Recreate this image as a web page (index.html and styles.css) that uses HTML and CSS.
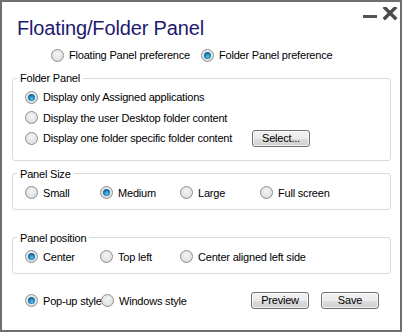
FILE: index.html
```html
<!DOCTYPE html>
<html lang="en">
<head>
  <meta charset="UTF-8">
  <title>Floating/Folder Panel</title>
  <link rel="stylesheet" href="styles.css">
</head>
<body>
  <div class="window">
    <!-- Header -->
    <div class="header">
      <h1 class="title">Floating/Folder Panel</h1>
      <div class="controls">
        <svg class="ctrl-icon" width="36" height="14" viewBox="0 0 36 14">
          <rect x="1" y="8" width="14" height="3" fill="#555"/>
          <path d="M23 1 L33 11 M33 1 L23 11" stroke="#4b4b4b" stroke-width="3.4" stroke-linecap="square"/>
        </svg>
      </div>
    </div>

    <div class="mode-row">
      <label class="opt opt-mode"><span class="radio"></span>Floating Panel preference</label>
      <label class="opt"><span class="radio checked"></span>Folder Panel preference</label>
    </div>

    <!-- Folder Panel -->
    <fieldset class="group group-folder">
      <legend class="group-title">Folder Panel</legend>
      <div class="row"><label class="opt"><span class="radio checked"></span>Display only Assigned applications</label></div>
      <div class="row"><label class="opt"><span class="radio"></span>Display the user Desktop folder content</label></div>
      <div class="row">
        <label class="opt opt-wide"><span class="radio"></span>Display one folder specific folder content</label>
        <button class="btn" type="button">Select...</button>
      </div>
    </fieldset>

    <!-- Panel Size -->
    <fieldset class="group">
      <legend class="group-title">Panel Size</legend>
      <div class="row cols">
        <label class="opt"><span class="radio"></span>Small</label>
        <label class="opt"><span class="radio checked"></span>Medium</label>
        <label class="opt"><span class="radio"></span>Large</label>
        <label class="opt"><span class="radio"></span>Full screen</label>
      </div>
    </fieldset>

    <!-- Panel position -->
    <fieldset class="group group-position">
      <legend class="group-title">Panel position</legend>
      <div class="row cols">
        <label class="opt"><span class="radio checked"></span>Center</label>
        <label class="opt"><span class="radio"></span>Top left</label>
        <label class="opt"><span class="radio"></span>Center aligned left side</label>
      </div>
    </fieldset>

    <!-- Footer -->
    <div class="footer row">
      <label class="opt opt-popup"><span class="radio checked"></span>Pop-up style</label>
      <label class="opt"><span class="radio"></span>Windows style</label>
      <div class="actions">
        <button class="btn" type="button">Preview</button>
        <button class="btn" type="button">Save</button>
      </div>
    </div>
  </div>
</body>
</html>
```

FILE: styles.css
```css
body {
  margin: 0;
  font-family: 'Liberation Sans', Arial, sans-serif;
  font-size: 11px;
  letter-spacing: -0.2px;
  color: #000;
  background: #fff;
}

.window {
  box-sizing: border-box;
  width: 402px;
  height: 332px;
  border: 2px solid #6f6f6f;
  padding: 0 9px 0 10px;
  background: #fff;
}

/* Header */
.header {
  display: flex;
  justify-content: space-between;
  align-items: flex-start;
}

.title {
  margin: 14px 0 0 5px;
  font-size: 20px;
  line-height: 24px;
  letter-spacing: -0.15px;
  font-weight: 400;
  color: #1d1a6f;
}

.controls {
  margin: 5px -7px 0 0;
}

.ctrl-icon {
  display: block;
}

/* Radio options */
.row {
  display: flex;
  align-items: center;
  height: 20.5px;
}

.opt {
  display: flex;
  align-items: center;
  white-space: nowrap;
}

.radio {
  position: relative;
  box-sizing: border-box;
  width: 13px;
  height: 13px;
  margin-right: 5px;
  border: 1px solid #8c8e90;
  border-radius: 50%;
  background: radial-gradient(circle at 50% 40%, #f6f6f6 0%, #e2e3e4 60%, #cfd1d3 100%);
  flex: none;
}

.radio.checked::after {
  content: '';
  position: absolute;
  left: 2px;
  top: 2px;
  width: 7px;
  height: 7px;
  border-radius: 50%;
  background: radial-gradient(circle at 55% 65%, #5ec4ee 0%, #1d7fb4 45%, #0b3f66 100%);
}

.mode-row {
  display: flex;
  align-items: center;
  height: 20px;
  margin-top: 5px;
  padding-left: 39px;
}

.opt-mode {
  width: 150px;
}

/* Group boxes */
.group {
  margin: 6px 0 0 0;
  padding: 2px 12px 6px 12px;
  border: 1px solid #d5dadf;
  border-radius: 3px;
}

.group-folder {
  padding-bottom: 11px;
}

.group-position {
  margin-top: 21px;
}

.group-title {
  margin-left: -8px;
  padding: 0 3px;
  line-height: 14px;
}

.opt-wide {
  width: 227px;
}

.cols {
  height: 20px;
}

.cols .opt {
  width: 80px;
}

.cols .opt:first-child {
  width: 75px;
}

/* Buttons */
.btn {
  box-sizing: border-box;
  width: 58px;
  height: 17px;
  padding: 0;
  font-family: 'Liberation Sans', Arial, sans-serif;
  font-size: 11px;
  letter-spacing: -0.2px;
  line-height: 15px;
  color: #000;
  border: 1px solid #707070;
  border-radius: 3px;
  background: linear-gradient(#f2f2f2 0%, #ebebeb 50%, #dddddd 51%, #cfcfcf 100%);
  box-shadow: inset 0 0 0 1px rgba(255, 255, 255, 0.7);
}

/* Footer */
.footer {
  height: 20px;
  margin-top: 17px;
  padding-left: 13px;
}

.opt-popup {
  width: 76px;
}

.actions {
  display: flex;
  gap: 12px;
  margin-left: auto;
  margin-right: 12px;
}
```
